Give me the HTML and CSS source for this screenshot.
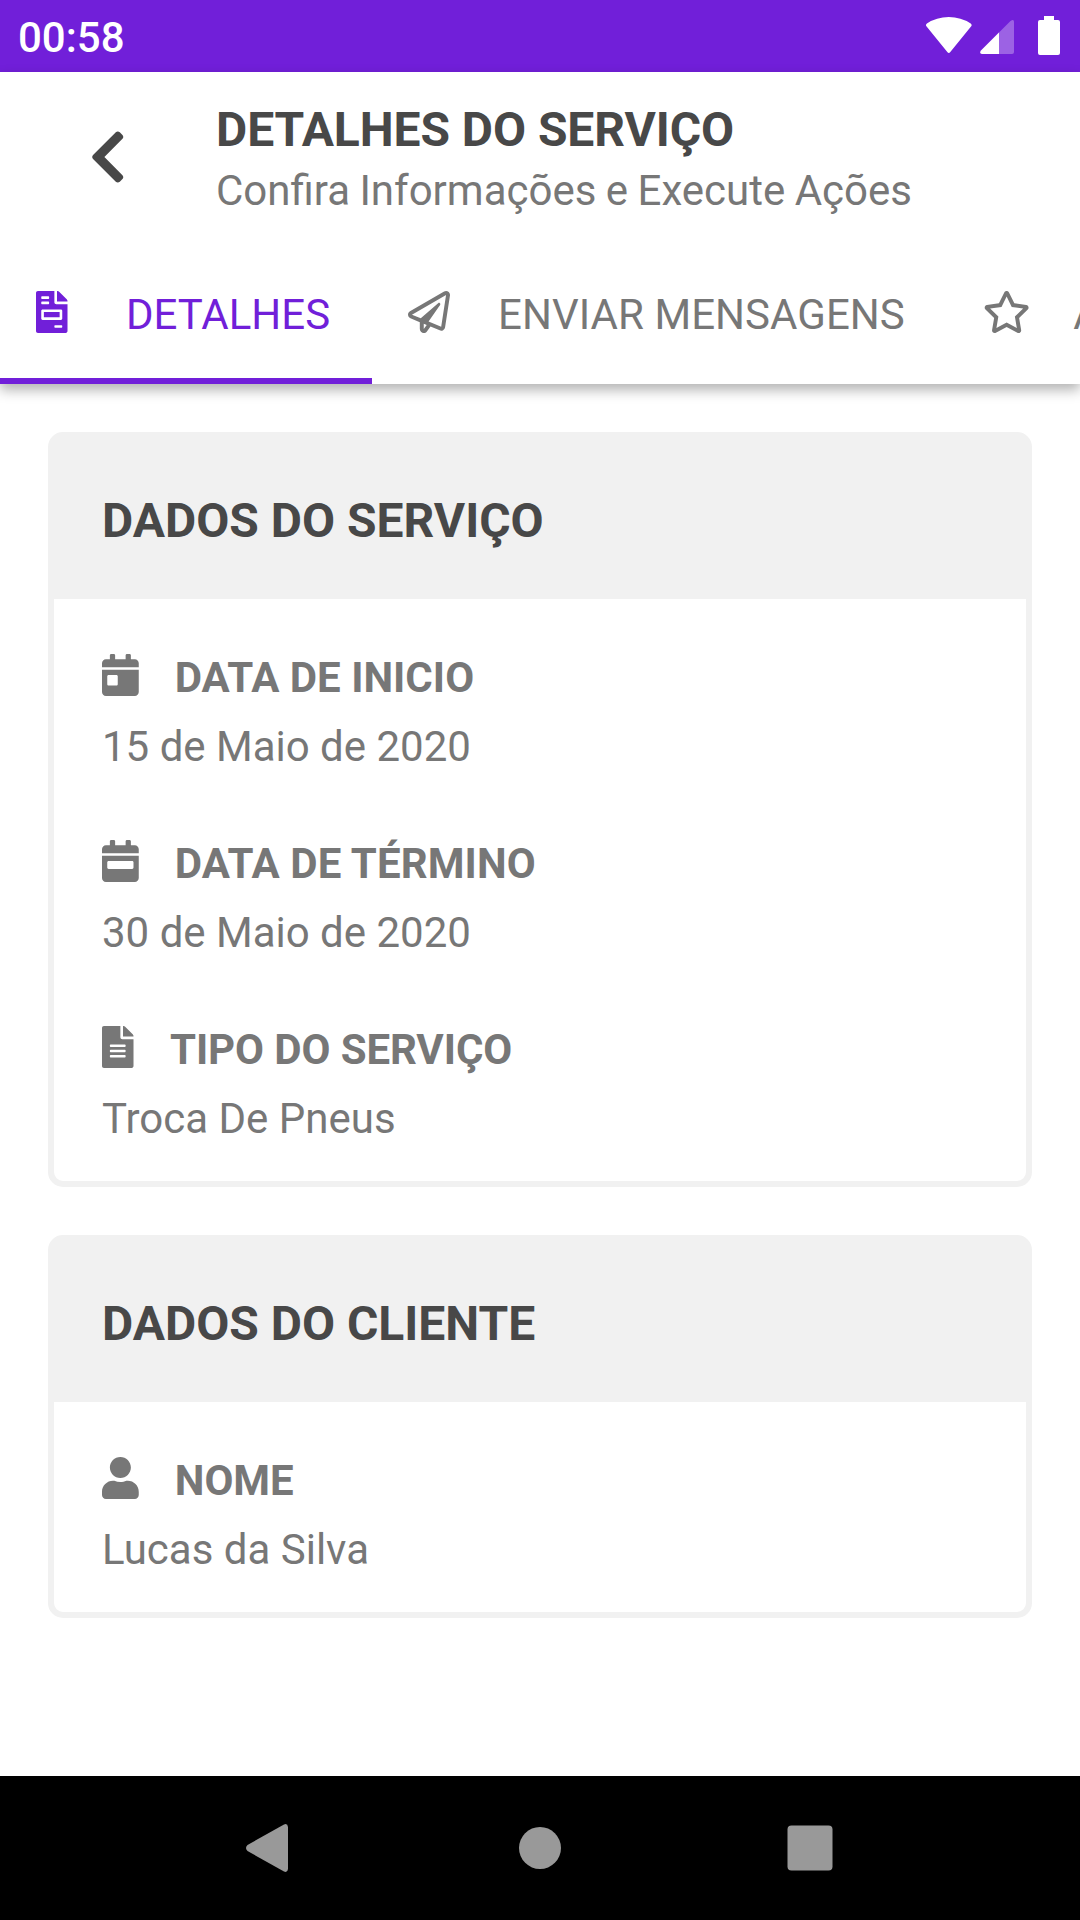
FILE: index.html
```html
<!DOCTYPE html>
<html lang="pt-BR">
<head>
<meta charset="utf-8">
<title>Detalhes do Serviço</title>
<link rel="stylesheet" href="styles.css">
</head>
<body>
<div class="screen">
  <div class="status-bar">
    <span class="clock">00:58</span>
    <svg class="status-icons" viewBox="0 0 140 48" fill="#fff">
      <path d="M0.600 12.600Q-0.800 10.900 0.900 9.500Q10.500 3 22.800 3Q35 3 44.700 9.500Q46.400 10.900 45 12.600L24.300 38Q22.800 39.800 21.300 38Z"/>
      <path opacity=".3" d="M56 40Q53 39.500 55 36.500L84.500 7Q88 4.500 88 8V38Q88 40 86 40Z"/>
      <path d="M73 18.500V40H56Q53 39.500 55 36.500Z"/>
      <path d="M118 2H128V6H132Q134 6 134 8V39Q134 41 132 41H114Q112 41 112 39V8Q112 6 114 6H118Z"/>
    </svg>
  </div>

  <header class="app-header">
    <div class="title-row">
      <svg class="back" viewBox="0 0 320 512"><path d="M34.52 239.03L228.87 44.69c9.37-9.37 24.57-9.37 33.94 0l22.67 22.67c9.36 9.36 9.37 24.52.04 33.9L131.49 256l154.02 154.75c9.34 9.38 9.32 24.54-.04 33.9l-22.67 22.67c-9.37 9.37-24.57 9.37-33.94 0L34.52 272.97c-9.37-9.37-9.37-24.57 0-33.94z"/></svg>
      <div class="titles">
        <h1 class="title">DETALHES DO SERVIÇO</h1>
        <p class="subtitle">Confira Informações e Execute Ações</p>
      </div>
    </div>
    <nav class="tabs">
      <div class="tab tab-active">
        <svg class="icon icon-file" viewBox="0 0 384 512"><path d="M288 256H96v64h192v-64zm89-151L279.100 7c-4.500-4.500-10.600-7-17-7H256v128h128v-6.100c0-6.300-2.500-12.400-7-16.900zm-153 31V0H24C10.700 0 0 10.700 0 24v464c0 13.300 10.700 24 24 24h336c13.300 0 24-10.700 24-24V160H248c-13.200 0-24-10.800-24-24zM64 72c0-4.420 3.580-8 8-8h80c4.420 0 8 3.580 8 8v16c0 4.420-3.580 8-8 8H72c-4.420 0-8-3.580-8-8V72zm0 64c0-4.420 3.580-8 8-8h80c4.420 0 8 3.580 8 8v16c0 4.420-3.580 8-8 8H72c-4.420 0-8-3.580-8-8v-16zm256 304c0 4.420-3.580 8-8 8h-80c-4.420 0-8-3.580-8-8v-16c0-4.420 3.580-8 8-8h80c4.420 0 8 3.580 8 8v16zm0-200v96c0 8.840-7.160 16-16 16H80c-8.840 0-16-7.160-16-16v-96c0-8.840 7.160-16 16-16h224c8.840 0 16 7.160 16 16z"/></svg>
        <span>DETALHES</span>
      </div>
      <div class="tab tab-messages">
        <svg class="icon icon-plane" viewBox="0 0 512 512"><path d="M440 6.500L24 246.400c-34.400 19.900-31.100 70.800 5.700 85.900L144 379.600V464c0 46.400 59.200 65.500 86.600 28.600l43.800-59.100 111.900 46.200c5.900 2.400 12.100 3.600 18.300 3.600 8.200 0 16.300-2.100 23.600-6.200 12.800-7.200 21.600-20 23.900-34.500l59.400-387.200c6.100-40.100-36.900-68.800-71.500-48.900zM192 464v-64.600l36.600 15.100L192 464zm212.600-28.700l-153.800-63.500L391 169.500c10.700-15.500-9.500-33.500-23.700-21.200L155.800 332.600 48 288 464 48l-59.400 387.300z"/></svg>
        <span>ENVIAR MENSAGENS</span>
      </div>
      <div class="tab tab-rating">
        <svg class="icon icon-star" viewBox="0 0 576 512"><path d="M528.100 171.500L382 150.200 316.700 17.800c-11.700-23.600-45.600-23.900-57.400 0L194 150.200 47.900 171.500c-26.200 3.800-36.700 36.100-17.700 54.600l105.700 103-25 145.500c-4.500 26.300 23.200 46 46.400 33.700L288 439.600l130.700 68.700c23.200 12.200 50.900-7.400 46.400-33.700l-25-145.500 105.700-103c19-18.500 8.500-50.800-17.700-54.600zM388.600 312.300l23.700 138.400L288 385.400l-124.300 65.300 23.700-138.400-100.600-98 139-20.200 62.200-126 62.200 126 139 20.200-100.600 98z"/></svg>
        <span>A</span>
      </div>
    </nav>
  </header>

  <main class="content">
    <section class="card">
      <h2 class="card-title">DADOS DO SERVIÇO</h2>
      <div class="card-body">
        <div class="field">
          <div class="label">
            <svg class="icon icon-cal" viewBox="0 0 448 512"><path d="M0 464c0 26.500 21.500 48 48 48h352c26.500 0 48-21.500 48-48V192H0v272zm64-192c0-8.800 7.200-16 16-16h96c8.800 0 16 7.200 16 16v96c0 8.800-7.200 16-16 16H80c-8.800 0-16-7.200-16-16v-96zM400 64h-48V16c0-8.800-7.200-16-16-16h-32c-8.800 0-16 7.200-16 16v48H160V16c0-8.800-7.200-16-16-16h-32c-8.800 0-16 7.200-16 16v48H48C21.500 64 0 85.500 0 112v48h448v-48c0-26.500-21.500-48-48-48z"/></svg>
            <span>DATA DE INICIO</span>
          </div>
          <p class="value">15 de Maio de 2020</p>
        </div>
        <div class="field">
          <div class="label">
            <svg class="icon icon-cal" viewBox="0 0 448 512"><path d="M0 464c0 26.500 21.500 48 48 48h352c26.500 0 48-21.500 48-48V192H0v272zm64-192c0-8.800 7.200-16 16-16h288c8.800 0 16 7.200 16 16v64c0 8.800-7.200 16-16 16H80c-8.800 0-16-7.200-16-16v-64zM400 64h-48V16c0-8.800-7.200-16-16-16h-32c-8.800 0-16 7.200-16 16v48H160V16c0-8.800-7.200-16-16-16h-32c-8.800 0-16 7.200-16 16v48H48C21.500 64 0 85.500 0 112v48h448v-48c0-26.500-21.500-48-48-48z"/></svg>
            <span class="label-wide">DATA DE TÉRMINO</span>
          </div>
          <p class="value">30 de Maio de 2020</p>
        </div>
        <div class="field">
          <div class="label">
            <svg class="icon icon-file" viewBox="0 0 384 512"><path d="M224 136V0H24C10.700 0 0 10.700 0 24v464c0 13.300 10.700 24 24 24h336c13.300 0 24-10.700 24-24V160H248c-13.200 0-24-10.800-24-24zm64 236c0 6.600-5.400 12-12 12H108c-6.600 0-12-5.400-12-12v-8c0-6.600 5.400-12 12-12h168c6.600 0 12 5.400 12 12v8zm0-64c0 6.600-5.400 12-12 12H108c-6.600 0-12-5.400-12-12v-8c0-6.600 5.400-12 12-12h168c6.600 0 12 5.400 12 12v8zm0-72v8c0 6.600-5.400 12-12 12H108c-6.600 0-12-5.400-12-12v-8c0-6.600 5.400-12 12-12h168c6.600 0 12 5.400 12 12zm96-114.100v6.100H256V0h6.100c6.400 0 12.500 2.500 17 7l97.900 98c4.500 4.500 7 10.600 7 16.900z"/></svg>
            <span class="label-tight">TIPO DO SERVIÇO</span>
          </div>
          <p class="value">Troca De Pneus</p>
        </div>
      </div>
    </section>

    <section class="card">
      <h2 class="card-title">DADOS DO CLIENTE</h2>
      <div class="card-body">
        <div class="field">
          <div class="label">
            <svg class="icon icon-cal" viewBox="0 0 448 512"><path d="M224 256c70.700 0 128-57.300 128-128S294.700 0 224 0 96 57.300 96 128s57.300 128 128 128zm89.600 32h-16.700c-22.200 10.200-46.900 16-72.900 16s-50.600-5.800-72.900-16h-16.700C60.200 288 0 348.200 0 422.400V464c0 26.500 21.500 48 48 48h352c26.500 0 48-21.500 48-48v-41.600c0-74.200-60.200-134.400-134.400-134.400z"/></svg>
            <span>NOME</span>
          </div>
          <p class="value">Lucas da Silva</p>
        </div>
      </div>
    </section>
  </main>

  <div class="nav-bar">
    <svg class="nav-icon" viewBox="0 0 60 60"><path d="M48 9V51Q47.500 55 44 53.500L7.500 33Q4.500 30 7.500 27L44 6.500Q47.500 5 48 9Z"/></svg>
    <svg class="nav-icon" viewBox="0 0 60 60"><circle cx="30" cy="30" r="21"/></svg>
    <svg class="nav-icon" viewBox="0 0 60 60"><rect x="7.500" y="7.500" width="45" height="45" rx="4"/></svg>
  </div>
</div>
</body>
</html>
```
FILE: styles.css
```css
* {
  box-sizing: border-box;
  margin: 0;
  padding: 0;
}

body {
  background: #fff;
  font-family: Roboto, sans-serif;
  font-size: 42px;
  line-height: 50px;
  color: #777;
}

svg {
  display: block;
  flex: none;
  fill: currentColor;
}

.screen {
  display: flex;
  flex-direction: column;
  width: 1080px;
  height: 1920px;
  overflow: hidden;
}

.status-bar {
  display: flex;
  align-items: center;
  justify-content: space-between;
  height: 72px;
  padding: 0 14px 0 18px;
  background: #711fd9;
  color: #fff;
}

.clock {
  font-weight: 500;
  padding-top: 4px;
}

.status-icons {
  width: 140px;
  height: 48px;
  margin-top: 4px;
  fill: #fff;
}

.app-header {
  height: 312px;
  background: #fff;
  box-shadow: 0 6px 12px rgba(0, 0, 0, 0.3);
}

.title-row {
  display: flex;
  align-items: flex-start;
  height: 156px;
  padding: 30px 0 0 89px;
}

.back {
  width: 37.5px;
  height: 60px;
  margin-top: 25px;
  color: #484848;
}

.titles {
  margin-left: 89.5px;
}

.title {
  font-size: 48px;
  font-weight: 700;
  line-height: 56px;
  letter-spacing: -0.07px;
  color: #484848;
}

.subtitle {
  margin-top: 8px;
  word-spacing: -1px;
}

.tabs {
  display: flex;
  height: 156px;
}

.tab {
  display: flex;
  flex: none;
  align-items: center;
  height: 156px;
  padding: 12px 36px 0;
  white-space: nowrap;
}

.tab span {
  padding-top: 5px;
}

.tab-active {
  width: 372px;
  padding-top: 18px;
  border-bottom: 6px solid #711fd9;
  color: #711fd9;
}

.tab-active span {
  margin-left: 58.5px;
}

.tab-messages {
  width: 575px;
}

.tab-messages span {
  margin-left: 48px;
  letter-spacing: 0.05px;
}

.tab-rating span {
  margin-left: 43px;
}

.icon {
  height: 42px;
}

.icon-file {
  width: 31.5px;
}

.icon-cal {
  width: 36.75px;
}

.icon-plane {
  width: 42px;
}

.icon-star {
  width: 47.25px;
}

.content {
  display: flex;
  flex: 1;
  flex-direction: column;
  gap: 48px;
  padding: 48px;
}

.card {
  border: 6px solid #f1f1f1;
  border-radius: 15px;
}

.card-title {
  height: 161px;
  padding: 55px 48px 0;
  background: #f1f1f1;
  font-size: 48px;
  font-weight: 700;
  line-height: 56px;
  color: #484848;
}

.card-body {
  display: flex;
  flex-direction: column;
  gap: 66px;
  padding: 53px 48px 37px;
}

.label {
  display: flex;
  align-items: flex-start;
  gap: 36px;
  height: 50px;
  font-weight: 700;
}

.label span {
  padding-top: 1px;
}

.label .label-wide {
  letter-spacing: 0.1px;
}

.label .label-tight {
  padding-left: 0.5px;
  letter-spacing: -0.1px;
}

.label .icon {
  margin-top: 2px;
}

.value {
  margin-top: 20px;
}

.nav-bar {
  display: flex;
  align-items: center;
  justify-content: space-between;
  height: 144px;
  padding: 0 240px;
  background: #000;
  color: #999;
}

.nav-icon {
  width: 60px;
  height: 60px;
}
```
